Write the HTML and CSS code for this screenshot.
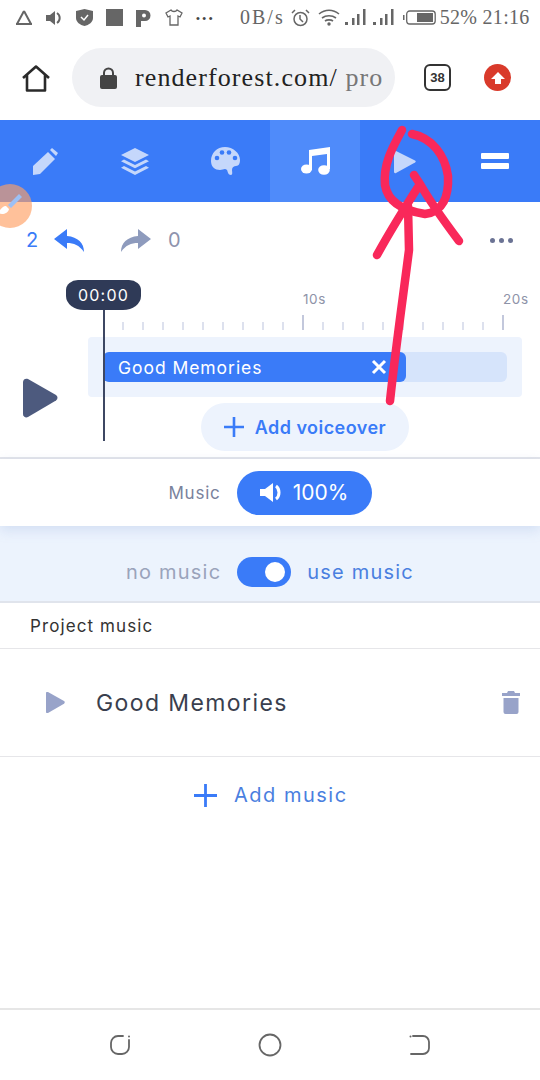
FILE: index.html
```html
<!DOCTYPE html>
<html lang="en">
    <head>
        <meta charset="UTF-8" />
        <meta name="viewport" content="width=device-width, initial-scale=1.0" />
        <title>Renderforest music</title>
        <link rel="stylesheet" href="styles.css">
    </head>
    <body>
        <div class="page">
            <div class="status-bar">
                <svg class="st-icon" width="18" height="16" viewBox="0 0 18 16"><path d="M9 1 2 14M9 1l7 13M1 14h16M5 10" fill="none" stroke="#666" stroke-width="2"/></svg>
                <svg class="st-icon" width="17" height="16" viewBox="0 0 17 16"><path d="M0 5h4l5-4v14l-5-4H0z" fill="#666"/><path d="M11 3a6 6 0 0 1 0 10" fill="none" stroke="#666" stroke-width="2"/></svg>
                <svg class="st-icon" width="17" height="17" viewBox="0 0 17 17"><path d="M0 2 8.500 0 17 2v7c0 4-4 7-8.500 8C4 16 0 13 0 9z" fill="#666"/><path d="m5 8 3 3 4-5" fill="none" stroke="#fff" stroke-width="1.500"/></svg>
                <div class="st-square"></div>
                <svg class="st-icon" width="16" height="18" viewBox="0 0 16 18"><path d="M0 1h9a5.500 5.500 0 0 1 0 11H5v6H0z" fill="#666"/><circle cx="8" cy="6.500" r="2" fill="#fff"/></svg>
                <svg class="st-icon" width="18" height="17" viewBox="0 0 18 17"><path d="M6 1 1 4l2 4 2-1v9h8V7l2 1 2-4-5-3c-1 2-5 2-6 0z" fill="none" stroke="#666" stroke-width="1.300"/></svg>
                <div class="st-dots">•••</div>
                <span class="st-speed">0B/s</span>
                <svg class="st-icon st-alarm" width="19" height="18" viewBox="0 0 19 18"><circle cx="9.500" cy="10" r="6.500" fill="none" stroke="#666" stroke-width="1.500"/><path d="M9 6v4l3 3M1 4l3-3M18 4l-3-3" fill="none" stroke="#666" stroke-width="1.500"/></svg>
                <svg class="st-icon st-wifi" width="22" height="17" viewBox="0 0 22 17"><path d="M1 5c6-5 14-5 20 0M4 9c4-3 10-3 14 0M7 12c2-1.500 6-1.500 8 0" fill="none" stroke="#666" stroke-width="1.600"/><circle cx="11" cy="15" r="1.700" fill="#666"/></svg>
                <svg class="st-icon st-signal" width="22" height="17" viewBox="0 0 22 17"><path d="M1 13h3v3H1zM8 9h2.500v7H8zM13 5h2.500v11H13zM19 0h2.500v16H19z" fill="#666"/></svg>
                <svg class="st-icon st-signal2" width="22" height="17" viewBox="0 0 22 17"><path d="M1 13h3v3H1zM8 9h2.500v7H8zM13 5h2.500v11H13zM19 0h2.500v16H19z" fill="#666"/></svg>
                <svg class="st-icon st-batt" width="33" height="15" viewBox="0 0 33 15"><rect x="3.700" y="1" width="28.500" height="13" rx="3" fill="none" stroke="#666" stroke-width="1.300"/><rect x="14" y="3" width="16" height="9" fill="#666"/><rect x="0" y="5" width="1.500" height="5" fill="#666"/></svg>
                <span class="st-clock">52% 21:16</span>
            </div>

            <div class="url-bar">
                <svg class="home-icon" width="28" height="27" viewBox="0 0 28 27"><path d="M1 13 14 1.500 27 13M5 10v15.500h18V10" fill="none" stroke="#2a2a2a" stroke-width="2.600" stroke-linejoin="round"/></svg>
                <div class="url-pill">
                    <svg class="lock" width="17" height="22" viewBox="0 0 17 22"><path d="M4 9V6a4.500 4.500 0 0 1 9 0v3" fill="none" stroke="#444" stroke-width="2"/><rect y="8" width="17" height="14" rx="2" fill="#444"/></svg>
                    <span class="url-text">renderforest.com/ <span class="url-path">pro</span></span>
                </div>
                <div class="tab-count">38</div>
                <div class="upload-icon">
                    <svg width="14" height="14" viewBox="0 0 14 14"><path d="M7 1 14 8H10V13H4V8H0z" fill="#fff"/></svg>
                </div>
            </div>

            <div class="tool-tabs">
                <div class="tool-tab">
                    <svg width="26" height="27" viewBox="0 0 26 27"><path d="M1 18 16 4l7 7L8 26l-7 1z" fill="#c5d7fb"/><path d="m18 2 2-2 6 5-2 3z" fill="#c5d7fb"/></svg>
                </div>
                <div class="tool-tab">
                    <svg width="28" height="27" viewBox="0 0 28 27"><path d="M14 0 28 7l-14 7L0 7z" fill="#c5d7fb"/><path d="m3 11.500 11 5.500 11-5.500 3 1.800-14 7-14-7zM3 18l11 5.500L25 18l3 1.700L14 27 0 19.700z" fill="#c5d7fb"/></svg>
                </div>
                <div class="tool-tab">
                    <svg width="29" height="28" viewBox="0 0 29 28"><path d="M14 0C6 0 0 6 0 14c0 6 4 9 9 9 3 0 5-2 7 0 1 2 1 5 4 5 2 0 1-4 1-5 0-3 2-4 4-4 3 0 4-3 4-6C29 6 22 0 14 0z" fill="#c5d7fb"/><circle cx="6" cy="11" r="2.300" fill="#3a7bf8"/><circle cx="11" cy="5.500" r="2.300" fill="#3a7bf8"/><circle cx="18" cy="5.500" r="2.300" fill="#3a7bf8"/><circle cx="24" cy="11" r="2.300" fill="#3a7bf8"/></svg>
                </div>
                <div class="tool-tab active">
                    <svg width="29" height="28" viewBox="0 0 29 28"><path d="M8 3 29 0v22h-3V7L11 9v14H8z" fill="#fff"/><ellipse cx="5.500" cy="22" rx="5.500" ry="4.500" fill="#fff"/><ellipse cx="23" cy="23" rx="5.800" ry="4.800" fill="#fff"/></svg>
                </div>
                <div class="tool-tab">
                    <svg width="23" height="25" viewBox="0 0 23 25"><path d="M2 2 21 11.500c1 .6 1 1.400 0 2L2 24c-1 .5-2 0-2-1V3c0-1 1-1.500 2-1z" fill="#c5d7fb"/></svg>
                </div>
                <div class="tool-tab">
                    <div class="burger"><div></div><div></div></div>
                </div>
            </div>

            <div class="timeline">
                <div class="history">
                    <span class="count-blue">2</span>
                    <svg width="31" height="23" viewBox="0 0 31 23"><path d="M13 0 0 10l13 10v-6c7 0 12 2 17 9 0-9-6-15-17-16z" fill="#3a7bf8"/></svg>
                    <svg class="redo" width="31" height="23" viewBox="0 0 31 23"><path d="M18 0 31 10 18 20v-6c-7 0-12 2-17 9 0-9 6-15 17-16z" fill="#8e9bbd"/></svg>
                    <span class="count-gray">0</span>
                    <div class="more-dots"><i></i><i></i><i></i></div>
                </div>
                <div class="timeline-body">
                    <div class="big-play">
                        <svg width="35" height="40" viewBox="0 0 35 40"><path d="M5 1 33 17c2 1.500 2 4 0 5.500L5 39c-2 1-5 0-5-3V4c0-3 3-4 5-3z" fill="#4d5a7e"/></svg>
                    </div>
                    <div class="timeline-main">
                        <div class="ruler">
                            <div class="ruler-labels"><span>10s</span><span>20s</span></div>
                            <div class="ticks">
                                <i></i><i></i><i></i><i></i><i></i><i></i><i></i><i></i><i></i><i class="major"></i>
                                <i></i><i></i><i></i><i></i><i></i><i></i><i></i><i></i><i></i><i class="major"></i>
                            </div>
                        </div>
                        <div class="track">
                            <div class="clip-bg">
                                <div class="clip">
                                    <span>Good Memories</span>
                                    <svg width="16" height="16" viewBox="0 0 16 16"><path d="m2 2 12 12M14 2 2 14" stroke="#fff" stroke-width="3"/></svg>
                                </div>
                            </div>
                        </div>
                        <div class="voiceover-wrap">
                            <div class="voiceover">
                                <svg width="20" height="20" viewBox="0 0 20 20"><path d="M10 0v20M0 10h20" stroke="#3a7bf8" stroke-width="2.600"/></svg>
                                <span>Add voiceover</span>
                            </div>
                        </div>
                    </div>
                </div>
                <div class="playhead">
                    <div class="playhead-label">00:00</div>
                    <div class="playhead-line"></div>
                </div>
            </div>

            <div class="music-row">
                <span class="music-label">Music</span>
                <div class="volume-pill">
                    <svg width="24" height="21" viewBox="0 0 24 21"><path d="M0 7h5l8-6v19l-8-6H0z" fill="#fff"/><path d="M16 4c4 3 4 10 0 13" fill="none" stroke="#fff" stroke-width="3"/></svg>
                    <span>100%</span>
                </div>
            </div>

            <div class="toggle-row">
                <span class="toggle-off">no music</span>
                <div class="toggle"><div class="knob"></div></div>
                <span class="toggle-on">use music</span>
            </div>

            <div class="project-title">Project music</div>

            <div class="song-row">
                <svg width="19" height="21" viewBox="0 0 19 21"><path d="M2 0 18 9c1 .7 1 2 0 2.700L2 21c-1 .3-2 0-2-1V1c0-1 1-1.300 2-1z" fill="#98a3c9"/></svg>
                <span class="song-name">Good Memories</span>
                <svg class="trash" width="18" height="23" viewBox="0 0 18 23"><path d="M6 0h6l1 2h5v3H0V2h5zM1.500 7h15v14a2 2 0 0 1-2 2h-11a2 2 0 0 1-2-2z" fill="#98a3c9"/></svg>
            </div>

            <div class="add-music">
                <svg width="23" height="23" viewBox="0 0 23 23"><path d="M11.500 0v23M0 11.500h23" stroke="#3a7bf8" stroke-width="2.800"/></svg>
                <span>Add music</span>
            </div>

            <div class="spacer"></div>

            <div class="nav-bar">
                <svg width="22" height="22" viewBox="0 0 22 22"><path d="M14 2H9a7 7 0 0 0-7 7v4a7 7 0 0 0 7 7h4a7 7 0 0 0 7-7V6" fill="none" stroke="#666" stroke-width="1.800" stroke-linecap="round"/><circle cx="20" cy="2.500" r="1" fill="#666"/></svg>
                <svg width="24" height="24" viewBox="0 0 24 24"><circle cx="12" cy="12" r="10.500" fill="none" stroke="#666" stroke-width="1.800"/></svg>
                <svg width="22" height="22" viewBox="0 0 22 22"><path d="M4 2h10a6 6 0 0 1 6 6v6a6 6 0 0 1-6 6H2" fill="none" stroke="#666" stroke-width="1.800" stroke-linecap="round"/><circle cx="1.500" cy="2.500" r="1" fill="#666"/></svg>
            </div>

            <!-- red marker scribble drawn over the screenshot -->
            <svg class="scribble" width="540" height="420" viewBox="0 0 540 420">
                <g fill="none" stroke="#f9285a" stroke-width="8.500" stroke-linecap="round" stroke-linejoin="round">
                    <path d="M402 130C392 148 383 165 385 185 388 203 405 211 425 214 443 212 449 196 448 176 445 155 432 138 412 134"/>
                    <path d="M390 401C396 345 404 290 409 250L408 206"/>
                    <path d="M377 255C388 235 400 215 420 184L414 175M420 184C432 205 447 225 459 241"/>
                </g>
            </svg>

            <div class="brush-button">
                <svg width="26" height="26" viewBox="0 0 26 26"><path d="M22 1 11 12l3 3L25 4z" fill="#9cc0f5"/><path d="M9 13c-4 0-5 4-9 7 5 2 11 1 12-4z" fill="#fff"/></svg>
            </div>
        </div>
    </body>
</html>
```

FILE: styles.css
```css
* {
    box-sizing: border-box;
}
html,
body {
    margin: 0;
    padding: 0;
}
body {
    font-family: Inter, "Open Sans", sans-serif;
    background: white;
}
.page {
    position: relative;
    width: 540px;
    height: 1080px;
    overflow: hidden;
    display: flex;
    flex-direction: column;
    color: #3a3f4e;
}

/* phone status bar */
.status-bar {
    height: 35px;
    padding-left: 15px;
    display: flex;
    align-items: center;
    gap: 13px;
    color: #666;
    font-family: "Liberation Serif", serif;
    font-size: 20px;
}
.st-square {
    width: 17px;
    height: 17px;
    background: #666;
}
.st-dots {
    font-family: "Liberation Sans", sans-serif;
    font-size: 11px;
    letter-spacing: 2.5px;
    width: 18px;
    color: #444;
}
.st-speed {
    margin-left: 13px;
    letter-spacing: 2px;
}
.st-alarm {
    margin-left: -7px;
}
.st-wifi {
    margin-left: -5px;
}
.st-signal {
    margin-left: -9px;
}
.st-signal2 {
    margin-left: -7px;
}
.st-batt {
    margin-left: -4px;
}
.st-clock {
    margin-left: -9px;
    letter-spacing: 0.3px;
    white-space: nowrap;
}

/* browser address bar */
.url-bar {
    height: 85px;
    display: flex;
    align-items: center;
    padding-left: 22px;
}
.home-icon {
    margin-right: 22px;
    margin-top: 1px;
}
.url-pill {
    width: 323px;
    height: 59px;
    border-radius: 30px;
    background: #f0f1f4;
    padding-left: 28px;
    display: flex;
    align-items: center;
    gap: 18px;
    overflow: hidden;
}
.lock {
    flex-shrink: 0;
}
.url-text {
    font-family: "Liberation Serif", serif;
    font-size: 26px;
    letter-spacing: 1.1px;
    color: #222;
    white-space: nowrap;
}
.url-path {
    color: #777;
}
.tab-count {
    width: 27px;
    height: 27px;
    margin-left: 29px;
    border: 2.5px solid #333;
    border-radius: 6px;
    font-family: "Liberation Sans", sans-serif;
    font-size: 13px;
    font-weight: bold;
    color: #333;
    display: flex;
    align-items: center;
    justify-content: center;
}
.upload-icon {
    width: 27px;
    height: 27px;
    margin-left: 33px;
    border-radius: 50%;
    background: #d93a2b;
    display: flex;
    align-items: center;
    justify-content: center;
}

/* editor tabs */
.tool-tabs {
    height: 82px;
    background: #3a7bf8;
    display: grid;
    grid-template-columns: repeat(6, 90px);
}
.tool-tab {
    display: flex;
    align-items: center;
    justify-content: center;
}
.tool-tab.active {
    background: #4f8bfa;
}
.burger {
    width: 28px;
    display: flex;
    flex-direction: column;
    gap: 4px;
}
.burger div {
    height: 6px;
    border-radius: 1px;
    background: white;
}

/* timeline */
.timeline {
    position: relative;
    height: 257px;
    border-bottom: 2px solid #e2e4ea;
}
.history {
    height: 76px;
    padding: 0 27px 0 26px;
    display: flex;
    align-items: center;
    font-size: 20px;
}
.count-blue {
    color: #3a7bf8;
    width: 28px;
}
.redo {
    margin-left: 35px;
}
.count-gray {
    margin-left: 17px;
    color: #8e93ad;
}
.more-dots {
    margin-left: auto;
    display: flex;
    gap: 4px;
}
.more-dots i {
    width: 5px;
    height: 5px;
    border-radius: 50%;
    background: #6b7394;
}
.timeline-body {
    display: flex;
}
.big-play {
    width: 88px;
    padding: 100px 0 0 23px;
}
.timeline-main {
    flex: 1;
}
.ruler {
    height: 59px;
    padding-left: 16px;
    display: flex;
    flex-direction: column;
}
.ruler-labels {
    height: 37px;
    position: relative;
    font-size: 13.500px;
    letter-spacing: 0.6px;
    color: #8e93a8;
}
.ruler-labels span {
    position: absolute;
    top: 13px;
}
.ruler-labels span:first-child {
    left: 199px;
}
.ruler-labels span:last-child {
    left: 399px;
}
.ticks {
    display: flex;
    align-items: flex-end;
    height: 15px;
}
.ticks i {
    width: 20px;
    height: 8px;
    border-right: 2px solid #dde1ee;
}
.ticks i.major {
    height: 15px;
    border-right-color: #c3c8dc;
}
.track {
    width: 434px;
    height: 60px;
    padding: 15px;
    background: #edf3fd;
    border-radius: 4px;
}
.clip-bg {
    width: 404px;
    height: 30px;
    background: #d6e4fb;
    border-radius: 6px;
}
.clip {
    width: 303px;
    height: 30px;
    padding: 0 19px 0 15px;
    background: #3a7bf8;
    border-radius: 6px;
    color: white;
    font-size: 17.500px;
    letter-spacing: 0.95px;
    display: flex;
    align-items: center;
    justify-content: space-between;
}
.voiceover-wrap {
    padding: 6px 0 0 113px;
}
.voiceover {
    width: 208px;
    height: 48px;
    border-radius: 24px;
    background: #edf3fd;
    color: #3a7bf8;
    font-size: 18px;
    font-weight: 600;
    letter-spacing: 0.45px;
    display: flex;
    align-items: center;
    justify-content: center;
    gap: 11px;
}

/* overlays the timeline, hence absolute */
.playhead {
    position: absolute;
    left: 66px;
    top: 78px;
    width: 75px;
    display: flex;
    flex-direction: column;
    align-items: center;
}
.playhead-label {
    width: 75px;
    height: 30px;
    background: #2f3a57;
    border-radius: 12px 12px 18px 18px / 10px 10px 14px 14px;
    color: white;
    font-size: 16px;
    letter-spacing: 1.2px;
    display: flex;
    align-items: center;
    justify-content: center;
}
.playhead-line {
    width: 2px;
    height: 131px;
    background: #3d4763;
}

/* music volume */
.music-row {
    position: relative;
    z-index: 1;
    height: 67px;
    display: flex;
    align-items: center;
    justify-content: center;
    gap: 16px;
    box-shadow: 0 4px 12px rgba(120, 150, 210, 0.22);
}
.music-label {
    font-size: 17px;
    letter-spacing: 0.8px;
    color: #7a829c;
}
.volume-pill {
    width: 135px;
    height: 44px;
    border-radius: 22px;
    background: #3a7bf8;
    color: white;
    font-size: 21px;
    display: flex;
    align-items: center;
    justify-content: center;
    gap: 9px;
}

.toggle-row {
    height: 77px;
    padding-top: 16px;
    background: #ecf3fd;
    border-bottom: 2px solid #e0e4ec;
    font-size: 20px;
    letter-spacing: 1.2px;
    display: flex;
    align-items: center;
    justify-content: center;
    gap: 16px;
}
.toggle-off {
    color: #9aa3bb;
}
.toggle-on {
    color: #4a7fe0;
}
.toggle {
    width: 54px;
    height: 30px;
    padding: 5px 6px;
    border-radius: 15px;
    background: #3a7bf8;
    display: flex;
    justify-content: flex-end;
}
.knob {
    width: 20px;
    height: 20px;
    border-radius: 50%;
    background: white;
}

/* project music list */
.project-title {
    height: 46px;
    padding-left: 30px;
    border-bottom: 1px solid #e6e6e9;
    font-size: 17px;
    letter-spacing: 1.1px;
    color: #333;
    display: flex;
    align-items: center;
}
.song-row {
    height: 108px;
    padding: 0 19px 0 46px;
    border-bottom: 1px solid #e6e6e9;
    display: flex;
    align-items: center;
}
.song-name {
    margin-left: 31px;
    font-size: 23px;
    letter-spacing: 1.4px;
}
.trash {
    margin-left: auto;
    margin-right: 1px;
}
.add-music {
    height: 76px;
    padding-left: 194px;
    color: #4a7fe0;
    font-size: 20px;
    letter-spacing: 1.5px;
    display: flex;
    align-items: center;
    gap: 17px;
}
.spacer {
    flex: 1;
}
.nav-bar {
    height: 72px;
    border-top: 2px solid #e6e6e6;
    padding: 0 109px;
    display: flex;
    align-items: center;
    justify-content: space-between;
}

/* drawn over the page */
.scribble {
    position: absolute;
    left: 0;
    top: 0;
    pointer-events: none;
}
.brush-button {
    position: absolute;
    left: -12px;
    top: 184px;
    width: 44px;
    height: 44px;
    border-radius: 50%;
    background: rgba(255, 160, 100, 0.65);
    display: flex;
    align-items: center;
    justify-content: center;
}
```
